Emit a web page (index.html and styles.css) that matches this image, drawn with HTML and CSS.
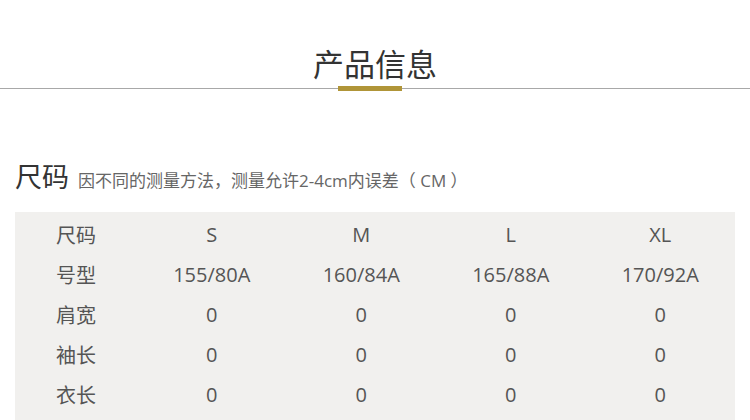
FILE: index.html
```html
<!DOCTYPE html>
<html lang="zh">
<head>
<meta charset="utf-8">
<link rel="stylesheet" href="styles.css">
</head>
<body>
<div class="page">
  <div class="head">
    <h1 class="title">产品信息</h1>
    <div class="rule"><span class="accent"></span></div>
  </div>
  <div class="section">
    <div class="sec-head">
      <span class="sec-title">尺码</span>
      <span class="sec-note">因不同的测量方法，测量允许2-4cm内误差（ CM ）</span>
    </div>
    <div class="table">
      <div class="row"><span class="lab">尺码</span><span>S</span><span>M</span><span>L</span><span>XL</span></div>
      <div class="row"><span class="lab">号型</span><span>155/80A</span><span>160/84A</span><span>165/88A</span><span>170/92A</span></div>
      <div class="row"><span class="lab">肩宽</span><span>0</span><span>0</span><span>0</span><span>0</span></div>
      <div class="row"><span class="lab">袖长</span><span>0</span><span>0</span><span>0</span><span>0</span></div>
      <div class="row"><span class="lab">衣长</span><span>0</span><span>0</span><span>0</span><span>0</span></div>
    </div>
  </div>
</div>
</body>
</html>
```
FILE: styles.css
```css
html, body { margin: 0; padding: 0; background: #fff; }
body { font-family: "Open Sans", "Noto Sans CJK SC", sans-serif; color: #333; }
.page { width: 750px; }
.head { padding-top: 44px; }
.title {
  margin: 0;
  text-align: center;
  font-size: 31px;
  font-weight: 400;
  line-height: 40px;
  color: #333;
}
.rule {
  margin-top: 4px;
  height: 1px;
  background: #a8a8a8;
  display: flex;
  justify-content: center;
  align-items: center;
}
.accent {
  display: block;
  width: 64px;
  height: 5px;
  background: #b09538;
  margin-right: 10px;
}
.section { padding: 68px 15px 0 15px; }
.sec-head { display: flex; align-items: baseline; height: 55px; }
.sec-title { font-size: 27px; color: #333; line-height: 40px; }
.sec-note { font-size: 17px; color: #666; margin-left: 9px; }
.table {
  background: #f1f0ee;
  padding-top: 2px;
  padding-bottom: 10px;
}
.row {
  display: grid;
  grid-template-columns: 122px repeat(4, 1fr);
  height: 40px;
  align-items: center;
  font-size: 20px;
  color: #555;
}
.row span { text-align: center; }
```
